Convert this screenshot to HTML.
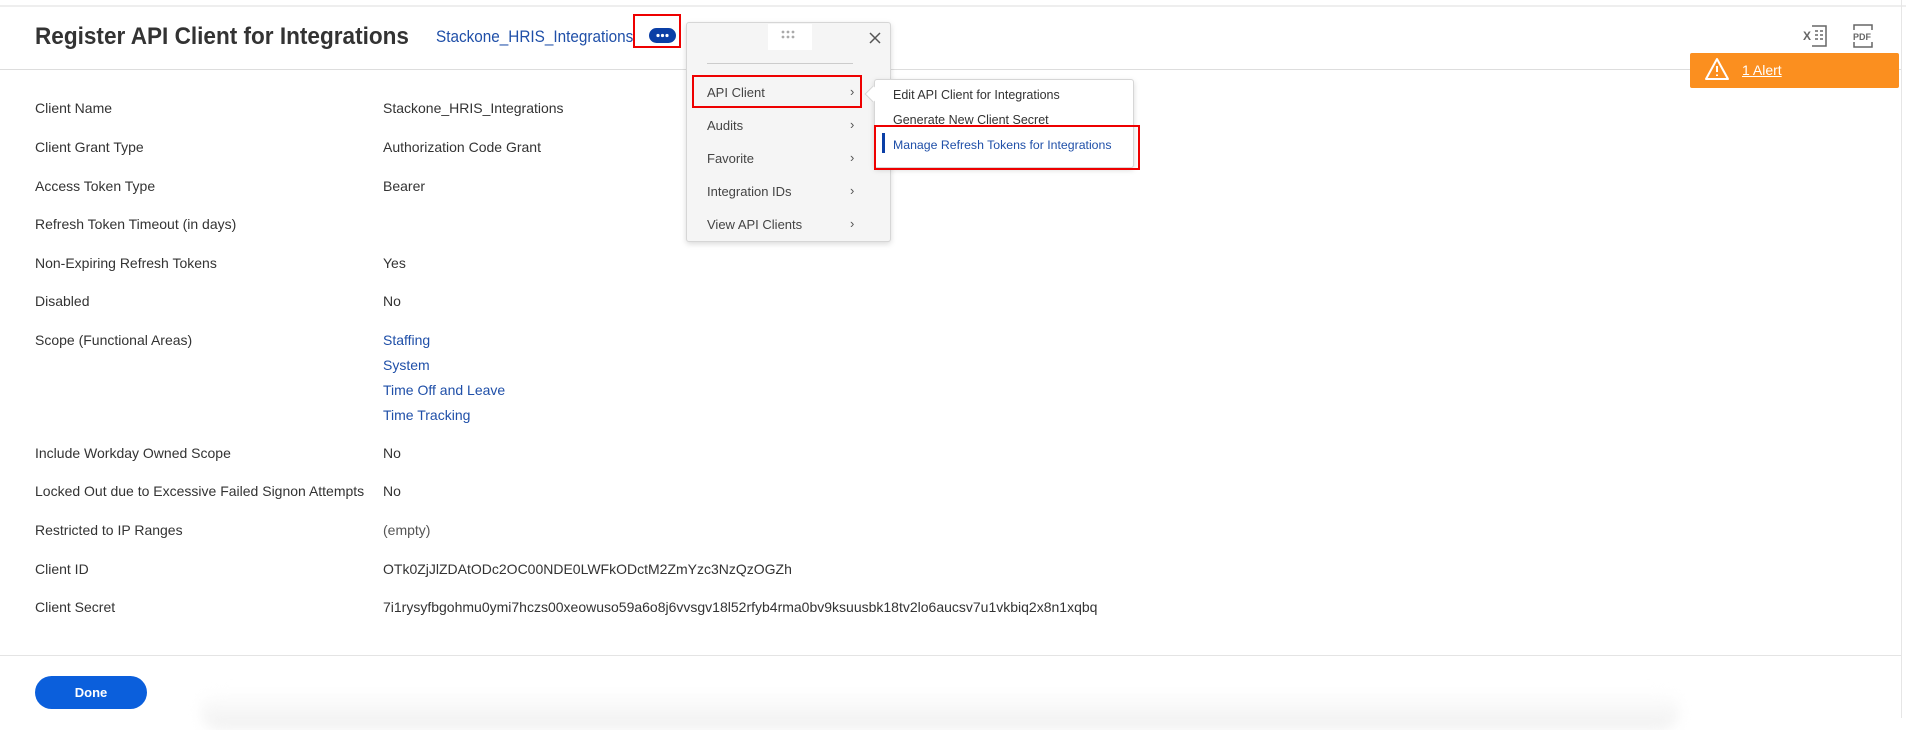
<!DOCTYPE html>
<html><head><meta charset="utf-8"><style>
*{box-sizing:border-box;margin:0;padding:0}
body{width:1906px;height:718px;background:#fff;font-family:"Liberation Sans",Arial,sans-serif;color:#333;position:relative;overflow:hidden}
.abs{position:absolute;white-space:nowrap}
.lbl{position:absolute;left:35px;font-size:14px;color:#333;white-space:nowrap}
.val{position:absolute;left:383px;font-size:14px;color:#333;white-space:nowrap}
.lnk{color:#1f4fa8}
.mi{position:absolute;left:707px;font-size:13px;color:#444}
.chev{position:absolute;left:850px;font-size:13px;color:#555}
.si{position:absolute;left:893px;font-size:12.5px;color:#333;white-space:nowrap}
</style></head><body>
<div class="abs" style="left:0;top:5px;width:1906px;height:2px;background:#eee"></div>
<div class="abs" style="left:1901px;top:0;width:1px;height:718px;background:#e6e6e6"></div>
<div class="abs" style="left:35px;top:23px;font-size:24px;font-weight:bold;color:#333;transform:scaleX(0.94);transform-origin:left">Register API Client for Integrations</div>
<div class="abs lnk" style="left:436px;top:27px;font-size:17px;transform:scaleX(0.9);transform-origin:left">Stackone_HRIS_Integrations</div>
<div class="abs" style="left:633px;top:14px;width:48px;height:34px;border:2px solid #e00"></div>
<div class="abs" style="left:649px;top:28px;width:27px;height:15px;border-radius:8px;background:#0b3fa6"></div>
<svg class="abs" style="left:649px;top:28px" width="27" height="15"><g fill="#fff"><circle cx="9" cy="7.5" r="1.6"/><circle cx="13.5" cy="7.5" r="1.6"/><circle cx="18" cy="7.5" r="1.6"/></g></svg>
<div class="abs" style="left:0;top:69px;width:1901px;height:1px;background:#ddd"></div>
<!-- export icons -->
<svg class="abs" style="left:1803px;top:24px" width="26" height="24" viewBox="0 0 26 24"><text x="0" y="16" font-size="12" font-weight="bold" fill="#666" font-family="Liberation Sans">X</text><path d="M9 2h14v20H9M12 7h3M17 7h3M12 11h3M17 11h3M12 15h3M17 15h3" stroke="#666" stroke-width="1.5" fill="none"/></svg>
<svg class="abs" style="left:1852px;top:24px" width="22" height="24" viewBox="0 0 22 24"><path d="M2 6V1h18v5M2 18v5h18v-5" stroke="#666" stroke-width="1.5" fill="none"/><text x="1" y="16" font-size="9" font-weight="bold" fill="#666" font-family="Liberation Sans">PDF</text></svg>
<div class="abs" style="left:1690px;top:53px;width:209px;height:35px;background:#fb8f1f;border-radius:2px"></div>
<svg class="abs" style="left:1704px;top:57px" width="26" height="24" viewBox="0 0 26 24"><path d="M13 2L24 22H2Z" stroke="#fff" stroke-width="2" fill="none" stroke-linejoin="round"/><path d="M13 9v6M13 17.5v1.5" stroke="#fff" stroke-width="2"/></svg>
<div class="abs" style="left:1742px;top:62px;color:#fff;font-size:14px;text-decoration:underline">1 Alert</div>

<div class="lbl" style="top:100px">Client Name</div><div class="val" style="top:100px">Stackone_HRIS_Integrations</div>
<div class="lbl" style="top:139px">Client Grant Type</div><div class="val" style="top:139px">Authorization Code Grant</div>
<div class="lbl" style="top:178px">Access Token Type</div><div class="val" style="top:178px">Bearer</div>
<div class="lbl" style="top:216px">Refresh Token Timeout (in days)</div>
<div class="lbl" style="top:255px">Non-Expiring Refresh Tokens</div><div class="val" style="top:255px">Yes</div>
<div class="lbl" style="top:293px">Disabled</div><div class="val" style="top:293px">No</div>
<div class="lbl" style="top:332px">Scope (Functional Areas)</div>
<div class="val lnk" style="top:332px">Staffing</div>
<div class="val lnk" style="top:357px">System</div>
<div class="val lnk" style="top:382px">Time Off and Leave</div>
<div class="val lnk" style="top:407px">Time Tracking</div>
<div class="lbl" style="top:445px">Include Workday Owned Scope</div><div class="val" style="top:445px">No</div>
<div class="lbl" style="top:483px">Locked Out due to Excessive Failed Signon Attempts</div><div class="val" style="top:483px">No</div>
<div class="lbl" style="top:522px">Restricted to IP Ranges</div><div class="val" style="top:522px;color:#555">(empty)</div>
<div class="lbl" style="top:561px">Client ID</div><div class="val" style="top:561px">OTk0ZjJlZDAtODc2OC00NDE0LWFkODctM2ZmYzc3NzQzOGZh</div>
<div class="lbl" style="top:599px">Client Secret</div><div class="val" style="top:599px">7i1rysyfbgohmu0ymi7hczs00xeowuso59a6o8j6vvsgv18l52rfyb4rma0bv9ksuusbk18tv2lo6aucsv7u1vkbiq2x8n1xqbq</div>

<div class="abs" style="left:0;top:655px;width:1901px;height:1px;background:#e4e4e4"></div>
<div class="abs" style="left:200px;top:690px;width:1480px;height:40px;background:linear-gradient(#fff,#f0f0f0);filter:blur(6px);border-radius:20px"></div>
<div class="abs" style="left:35px;top:676px;width:112px;height:33px;border-radius:17px;background:#0b5fdc;color:#fff;font-size:13px;font-weight:bold;text-align:center;line-height:33px">Done</div>

<!-- menu -->
<div class="abs" style="left:686px;top:22px;width:205px;height:220px;background:#f5f5f5;border:1px solid #d6d6d6;border-radius:3px;box-shadow:0 2px 6px rgba(0,0,0,0.15)"></div>
<div class="abs" style="left:768px;top:24px;width:44px;height:26px;background:#fff"></div>
<svg class="abs" style="left:780px;top:30px" width="18" height="10"><g fill="#aaa"><circle cx="3" cy="2" r="1.4"/><circle cx="8" cy="2" r="1.4"/><circle cx="13" cy="2" r="1.4"/><circle cx="3" cy="7" r="1.4"/><circle cx="8" cy="7" r="1.4"/><circle cx="13" cy="7" r="1.4"/></g></svg>
<svg class="abs" style="left:869px;top:32px" width="12" height="12"><path d="M1 1L11 11M11 1L1 11" stroke="#555" stroke-width="1.5"/></svg>
<div class="abs" style="left:707px;top:63px;width:146px;height:1px;background:#ccc"></div>
<div class="abs" style="left:692px;top:75px;width:170px;height:33px;border:2px solid #e00"></div>
<div class="mi" style="top:85px">API Client</div><div class="chev" style="top:84px">›</div>
<div class="mi" style="top:118px">Audits</div><div class="chev" style="top:117px">›</div>
<div class="mi" style="top:151px">Favorite</div><div class="chev" style="top:150px">›</div>
<div class="mi" style="top:184px">Integration IDs</div><div class="chev" style="top:183px">›</div>
<div class="mi" style="top:217px">View API Clients</div><div class="chev" style="top:216px">›</div>
<!-- submenu -->
<div class="abs" style="left:874px;top:79px;width:260px;height:89px;background:#fff;border:1px solid #d6d6d6;border-radius:3px;box-shadow:0 2px 6px rgba(0,0,0,0.15)"></div>
<div class="abs" style="left:867px;top:88px;width:12px;height:12px;background:#fff;transform:rotate(45deg);border-left:1px solid #d6d6d6;border-bottom:1px solid #d6d6d6"></div>
<div class="si" style="top:88px">Edit API Client for Integrations</div>
<div class="si" style="top:113px">Generate New Client Secret</div>
<div class="abs" style="left:882px;top:133px;width:3px;height:20px;background:#0b3fa6"></div>
<div class="si" style="top:138px;color:#1f4fa8;font-size:12.3px">Manage Refresh Tokens for Integrations</div>
<div class="abs" style="left:874px;top:125px;width:266px;height:45px;border:2px solid #e00"></div>
</body></html>
